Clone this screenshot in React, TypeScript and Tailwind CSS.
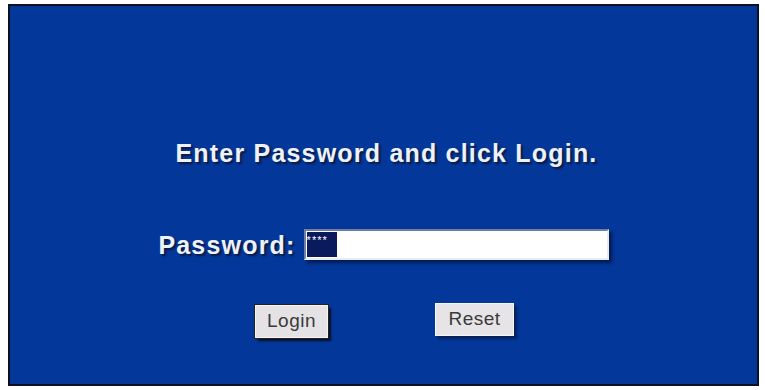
import React from "react";

export default function App() {
  const font = { fontFamily: '"Liberation Sans", Arial, sans-serif' };
  return (
    <div className="w-[765px] h-[390px] bg-white pt-[4px] pl-[8px]" style={font}>
      <div className="w-[751px] h-[382px] border-2 border-[#0b1024] bg-[#04379a] flex flex-col items-center">
        <div className="mt-[132px] ml-[6px] text-[25px] font-bold tracking-[1.2px] text-[#eef2f8] leading-[30px] [text-shadow:2px_2px_2px_#0a1a40]">
          Enter Password and click Login.
        </div>
        <div className="mt-[61px] flex items-center gap-[8px]">
          <span className="text-[25px] font-bold tracking-[1.2px] text-[#eef2f8] leading-[30px] [text-shadow:2px_2px_2px_#0a1a40]">
            Password:
          </span>
          <div className="w-[305px] h-[31px] bg-white border-t-2 border-l-2 border-[#6f7f9f] border-b-2 border-r-2 border-b-[#e8ecf3] border-r-[#e8ecf3] flex items-center pl-[1px] shadow-[3px_3px_3px_rgba(5,15,50,0.7)]">
            <span className="bg-[#0b1a5c] text-white text-[11px] leading-[16px] h-[25px] w-[30px] tracking-[1px] overflow-hidden">
              ****
            </span>
          </div>
        </div>
        <div className="mt-[44px] flex items-start gap-[107px] ml-[2px]">
          <button className="mt-[1px] w-[73px] h-[33px] bg-[#e4e2e4] text-[#3a3a3a] text-[19px] tracking-[0.5px] border border-[#f4f4f4] shadow-[3px_3px_2px_#0b0f22] outline outline-1 outline-[#222]">
            Login
          </button>
          <button className="-mt-[1px] w-[79px] h-[33px] bg-[#e6e4e6] text-[#3a3a3a] text-[19px] tracking-[0.5px] border border-[#f6f6f6] shadow-[3px_3px_2px_rgba(10,20,50,0.6)]">
            Reset
          </button>
        </div>
      </div>
    </div>
  );
}
